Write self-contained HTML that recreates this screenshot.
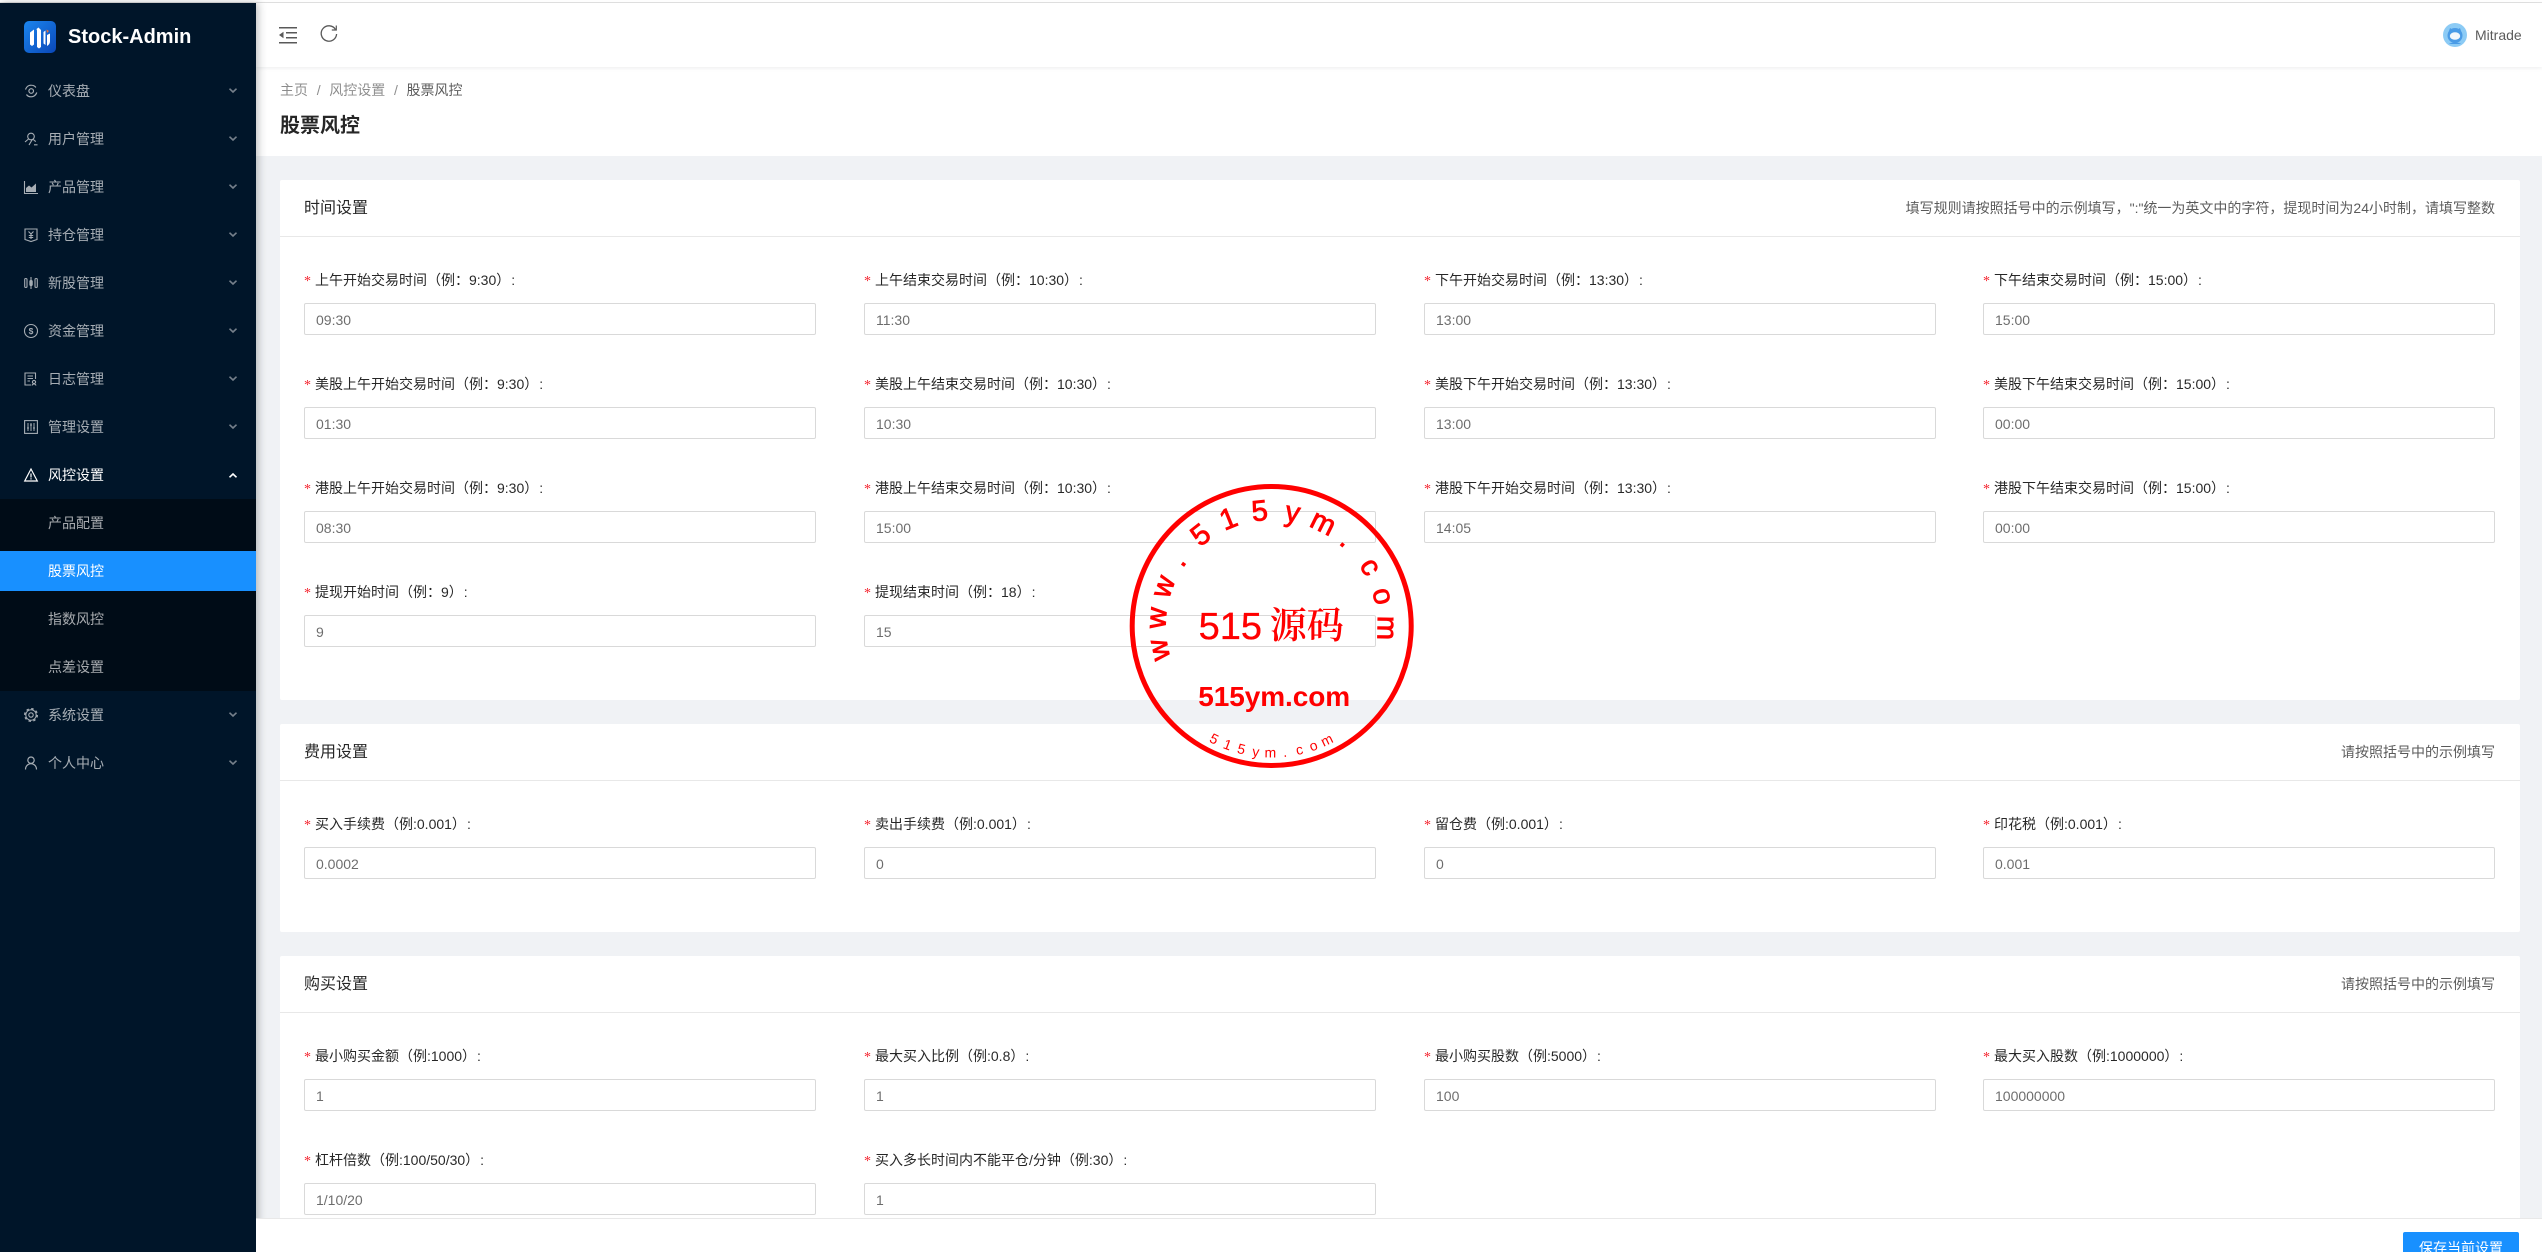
<!DOCTYPE html>
<html lang="zh-CN">
<head>
<meta charset="utf-8">
<title>股票风控</title>
<style>
*{box-sizing:border-box}
html,body{margin:0;padding:0;width:2542px;height:1252px;overflow:hidden;background:#f0f2f5}
body{position:relative;font-family:"Liberation Sans","Noto Sans CJK SC",sans-serif;font-size:14px;color:rgba(0,0,0,.65)}
.abs,.m,.l,.i,.c,.ic,.ch{position:absolute}
#top{left:0;top:0;width:2542px;height:3px;background:#fff;border-bottom:1px solid #e3e3e3}
#side{left:0;top:3px;width:256px;height:1249px;background:#001529;box-shadow:2px 0 8px rgba(29,35,41,.3);z-index:3}
#sub{left:0;top:499px;width:256px;height:192px;background:#000c17;z-index:4}
#act{left:0;top:551px;width:256px;height:40px;background:#1890ff;z-index:5}
.m{left:48px;height:22px;line-height:22px;color:rgba(255,255,255,.65);z-index:6;white-space:nowrap}
.ic{left:24px;width:14px;height:14px;z-index:6;overflow:visible}
.ch{left:229px;width:8px;height:5px;z-index:6;overflow:visible}
#logo{left:24px;top:21px;width:32px;height:32px;z-index:6}
#brand{left:68px;top:20px;height:34px;line-height:34px;color:#fff;font-weight:700;font-size:20px;z-index:6;white-space:nowrap}
#hdr{left:256px;top:3px;width:2286px;height:64px;background:#fff;box-shadow:0 1px 4px rgba(0,21,41,.08);z-index:2}
#crumb{left:256px;top:67px;width:2286px;height:89px;background:#fff}
.c{background:#fff;left:280px;width:2240px;border-radius:2px}
.h{position:absolute;left:0;top:0;width:100%;height:57px;border-bottom:1px solid #e8e8e8}
.t{position:absolute;left:24px;top:17px;font-size:16px;line-height:24px;color:rgba(0,0,0,.85)}
.e{position:absolute;right:25px;top:17px;line-height:22px;color:rgba(0,0,0,.65);white-space:nowrap}
.l{height:22px;line-height:22px;color:rgba(0,0,0,.85);white-space:nowrap}
.l b{font-weight:400;color:#f5222d;font-family:"Liberation Serif",serif;margin-right:4px;font-size:14px}
.l i{font-style:normal;margin-left:1px}
.i{width:512px;height:32px;border:1px solid #d9d9d9;border-radius:2px;padding-left:11px;line-height:32px;color:rgba(0,0,0,.58);background:#fff}
#foot{left:256px;top:1218px;width:2286px;height:34px;background:#fff;border-top:1px solid #e8e8e8;z-index:7}
#btn{left:2403px;top:1232px;width:116px;height:32px;background:#1890ff;border-radius:2px;color:#fff;text-align:center;line-height:32px;z-index:8}
#stamp{left:1100px;top:470px;width:340px;height:320px;z-index:9;overflow:visible}
</style>
</head>
<body>
<div class="abs" id="top"></div>
<div class="abs" id="side"></div>
<div class="abs" id="sub"></div>
<div class="abs" id="act"></div>

<svg class="abs" id="logo" viewBox="0 0 32 32">
<defs><linearGradient id="g" x1="0" y1="0" x2="1" y2="1"><stop offset="0" stop-color="#1b86ee"/><stop offset="1" stop-color="#0a47b8"/></linearGradient></defs>
<rect width="32" height="32" rx="5" fill="url(#g)"/>
<path d="M6 11.500L10 8.500V23.500L8 25 6 23.500ZM12.500 8L14.500 6.500 17 9V26L15 27.500 13 26V9.500ZM19.500 11L21.500 9.500V24L19.500 22.500ZM23 14L26 12.500V20C26 23 24.500 24 23 25Z" fill="#fff"/>
<path d="M22.500 8.500l2.500 1.500-2 2z" fill="#e8703a"/>
</svg>
<div class="abs" id="brand">Stock-Admin</div>

<!-- menu icons -->
<svg class="ic" style="top:84px" viewBox="0 0 14 14" fill="none" stroke="#a6adb4" stroke-width="1.200"><circle cx="7.200" cy="7" r="2.300"/><path d="M1.500 5.500C2.500 2.500 5 1 7.500 1.200c2 .1 3.500 1 4.300 2.300M12.800 8.500C11.800 11.500 9.200 13 6.800 12.800c-2-.1-3.500-1-4.300-2.300"/></svg>
<svg class="ic" style="top:132px" viewBox="0 0 14 14" fill="none" stroke="#a6adb4" stroke-width="1.100"><circle cx="7" cy="4.500" r="3.300"/><path d="M1 10l3.500-3M5 13l3.300-5.500c1.500.2 2.800 1 3.200 2.300M10 12.800h3.500"/></svg>
<svg class="ic" style="top:180px" viewBox="0 0 14 14"><path d="M.5 1v12.500H14" fill="none" stroke="#a6adb4" stroke-width="1.100"/><path d="M2 12V8l3-2.500 2.500 2L12 3.500V12z" fill="#a6adb4"/></svg>
<svg class="ic" style="top:228px" viewBox="0 0 14 14" fill="none" stroke="#a6adb4" stroke-width="1.100"><path d="M1 1h12v10.500l-6 2-6-2z"/><path d="M4.500 3.500L7 6l2.500-2.500M7 6v5M4.800 7.500h4.400M4.800 9.500h4.400"/></svg>
<svg class="ic" style="top:276px" viewBox="0 0 14 14" fill="none" stroke="#a6adb4" stroke-width="1.100"><rect x=".7" y="2.500" width="2.300" height="9" rx="1.100"/><rect x="5.900" y="4.500" width="2.300" height="5" rx="1" fill="#a6adb4"/><rect x="11" y="2.500" width="2.300" height="9" rx="1.100"/><path d="M7 1v12"/></svg>
<svg class="ic" style="top:324px" viewBox="0 0 14 14" fill="none" stroke="#a6adb4" stroke-width="1.100"><circle cx="7" cy="7" r="6.500"/><text x="7" y="10" text-anchor="middle" font-family="Liberation Sans" font-size="8.500" font-weight="700" fill="#a6adb4" stroke="none">$</text></svg>
<svg class="ic" style="top:372px" viewBox="0 0 14 14" fill="none" stroke="#a6adb4" stroke-width="1.100"><path d="M7 13H1V1h10.500v6M3.500 4h5.500M3.500 6.500h5.500M3.500 9h2.500"/><circle cx="10" cy="10" r="1.600"/><path d="M8 13.500c.3-1 1-1.500 2-1.500s1.700.5 2 1.500"/></svg>
<svg class="ic" style="top:420px" viewBox="0 0 14 14" fill="none" stroke="#a6adb4" stroke-width="1.100"><rect x=".6" y=".6" width="12.800" height="12.800"/><path d="M4 3v8M7 3v8M10 3v8M3 8h2M6 5h2M9 8h2" stroke-width="1"/></svg>
<svg class="ic" style="top:468px" viewBox="0 0 14 14" fill="none" stroke="#fff" stroke-width="1.200"><path d="M7 1L.7 13h12.600zM7 5.500v4M7 10.300v1.200"/></svg>
<svg class="ic" style="top:708px" viewBox="0 0 14 14" fill="none" stroke="#a6adb4"><circle cx="7" cy="7" r="5.200" stroke-width="1"/><circle cx="7" cy="7" r="6.300" stroke-width="1.400" stroke-dasharray="2.500 2.448"/><circle cx="7" cy="7" r="2.200" stroke-width="1.100"/></svg>
<svg class="ic" style="top:756px" viewBox="0 0 14 14" fill="none" stroke="#a6adb4" stroke-width="1.200"><circle cx="7" cy="4.200" r="3.200"/><path d="M1.500 13.500c0-3.500 2.500-5.800 5.500-5.800s5.500 2.300 5.500 5.800"/></svg>

<!-- chevrons -->
<svg class="ch" style="top:88px" viewBox="0 0 8 5" fill="none" stroke="#76808b" stroke-width="1.600"><path d="M.5.700L4 4l3.500-3.300"/></svg>
<svg class="ch" style="top:136px" viewBox="0 0 8 5" fill="none" stroke="#76808b" stroke-width="1.600"><path d="M.5.700L4 4l3.500-3.300"/></svg>
<svg class="ch" style="top:184px" viewBox="0 0 8 5" fill="none" stroke="#76808b" stroke-width="1.600"><path d="M.5.700L4 4l3.500-3.300"/></svg>
<svg class="ch" style="top:232px" viewBox="0 0 8 5" fill="none" stroke="#76808b" stroke-width="1.600"><path d="M.5.700L4 4l3.500-3.300"/></svg>
<svg class="ch" style="top:280px" viewBox="0 0 8 5" fill="none" stroke="#76808b" stroke-width="1.600"><path d="M.5.700L4 4l3.500-3.300"/></svg>
<svg class="ch" style="top:328px" viewBox="0 0 8 5" fill="none" stroke="#76808b" stroke-width="1.600"><path d="M.5.700L4 4l3.500-3.300"/></svg>
<svg class="ch" style="top:376px" viewBox="0 0 8 5" fill="none" stroke="#76808b" stroke-width="1.600"><path d="M.5.700L4 4l3.500-3.300"/></svg>
<svg class="ch" style="top:424px" viewBox="0 0 8 5" fill="none" stroke="#76808b" stroke-width="1.600"><path d="M.5.700L4 4l3.500-3.300"/></svg>
<svg class="ch" style="top:473px" viewBox="0 0 8 5" fill="none" stroke="#fff" stroke-width="1.600"><path d="M.5 4.300L4 1l3.500 3.300"/></svg>
<svg class="ch" style="top:712px" viewBox="0 0 8 5" fill="none" stroke="#76808b" stroke-width="1.600"><path d="M.5.700L4 4l3.500-3.300"/></svg>
<svg class="ch" style="top:760px" viewBox="0 0 8 5" fill="none" stroke="#76808b" stroke-width="1.600"><path d="M.5.700L4 4l3.500-3.300"/></svg>

<div class="m" style="top:80px">仪表盘</div>
<div class="m" style="top:128px">用户管理</div>
<div class="m" style="top:176px">产品管理</div>
<div class="m" style="top:224px">持仓管理</div>
<div class="m" style="top:272px">新股管理</div>
<div class="m" style="top:320px">资金管理</div>
<div class="m" style="top:368px">日志管理</div>
<div class="m" style="top:416px">管理设置</div>
<div class="m" style="top:464px;color:#fff">风控设置</div>
<div class="m" style="top:512px">产品配置</div>
<div class="m" style="top:560px;color:#fff">股票风控</div>
<div class="m" style="top:608px">指数风控</div>
<div class="m" style="top:656px">点差设置</div>
<div class="m" style="top:704px">系统设置</div>
<div class="m" style="top:752px">个人中心</div>

<!-- header -->
<div class="abs" id="hdr">
<svg class="abs" style="left:23px;top:24px" width="18" height="17" viewBox="0 0 18 17" fill="#595959"><rect y="0" width="18" height="1.500"/><rect x="7" y="5" width="11" height="1.500"/><rect x="7" y="10" width="11" height="1.500"/><rect y="15" width="18" height="1.500"/><path d="M4.500 4.800v6.400L0 8z"/></svg>
<svg class="abs" style="left:64px;top:21px" width="18" height="18" viewBox="0 0 18 18" fill="none" stroke="#595959" stroke-width="1.300"><path d="M15.500 5.500A7.700 7.700 0 1 0 16.600 10"/><path d="M16.300 1.500v4.500h-4.500" stroke-width="1.200"/></svg>
<svg class="abs" style="left:2187px;top:20px" width="24" height="24" viewBox="0 0 24 24"><circle cx="12" cy="12" r="12" fill="#8ccbf5"/><path d="M6 8l1-3 3 2h4l3-2 1 3" fill="#4a9be6"/><circle cx="12" cy="12.500" r="7.500" fill="#4a9be6"/><ellipse cx="12" cy="13" rx="5.200" ry="3.800" fill="#f4f7fb"/><path d="M6 21c2-2 10-2 12 0" fill="#4a9be6"/></svg>
<div class="abs" style="left:2219px;top:21px;line-height:22px;color:rgba(0,0,0,.65)">Mitrade</div>
</div>

<div class="abs" id="crumb">
<div class="abs" style="left:24px;top:12px;line-height:22px;white-space:nowrap;color:rgba(0,0,0,.45)">主页<span style="margin:0 8.700px">/</span>风控设置<span style="margin:0 8.700px">/</span><span style="color:rgba(0,0,0,.65)">股票风控</span></div>
<div class="abs" style="left:24px;top:43px;font-size:20px;line-height:32px;font-weight:700;color:rgba(0,0,0,.85)">股票风控</div>
</div>

<!-- card 1 -->
<div class="c" style="top:180px;height:520px"><div class="h"><div class="t">时间设置</div><div class="e">填写规则请按照括号中的示例填写，":"统一为英文中的字符，提现时间为24小时制，请填写整数</div></div></div>
<div class="l" style="left:304px;top:269px"><b>*</b>上午开始交易时间（例：9:30）<i>:</i></div><div class="i" style="left:304px;top:303px">09:30</div>
<div class="l" style="left:864px;top:269px"><b>*</b>上午结束交易时间（例：10:30）<i>:</i></div><div class="i" style="left:864px;top:303px">11:30</div>
<div class="l" style="left:1424px;top:269px"><b>*</b>下午开始交易时间（例：13:30）<i>:</i></div><div class="i" style="left:1424px;top:303px">13:00</div>
<div class="l" style="left:1983px;top:269px"><b>*</b>下午结束交易时间（例：15:00）<i>:</i></div><div class="i" style="left:1983px;top:303px">15:00</div>

<div class="l" style="left:304px;top:373px"><b>*</b>美股上午开始交易时间（例：9:30）<i>:</i></div><div class="i" style="left:304px;top:407px">01:30</div>
<div class="l" style="left:864px;top:373px"><b>*</b>美股上午结束交易时间（例：10:30）<i>:</i></div><div class="i" style="left:864px;top:407px">10:30</div>
<div class="l" style="left:1424px;top:373px"><b>*</b>美股下午开始交易时间（例：13:30）<i>:</i></div><div class="i" style="left:1424px;top:407px">13:00</div>
<div class="l" style="left:1983px;top:373px"><b>*</b>美股下午结束交易时间（例：15:00）<i>:</i></div><div class="i" style="left:1983px;top:407px">00:00</div>

<div class="l" style="left:304px;top:477px"><b>*</b>港股上午开始交易时间（例：9:30）<i>:</i></div><div class="i" style="left:304px;top:511px">08:30</div>
<div class="l" style="left:864px;top:477px"><b>*</b>港股上午结束交易时间（例：10:30）<i>:</i></div><div class="i" style="left:864px;top:511px">15:00</div>
<div class="l" style="left:1424px;top:477px"><b>*</b>港股下午开始交易时间（例：13:30）<i>:</i></div><div class="i" style="left:1424px;top:511px">14:05</div>
<div class="l" style="left:1983px;top:477px"><b>*</b>港股下午结束交易时间（例：15:00）<i>:</i></div><div class="i" style="left:1983px;top:511px">00:00</div>

<div class="l" style="left:304px;top:581px"><b>*</b>提现开始时间（例：9）<i>:</i></div><div class="i" style="left:304px;top:615px">9</div>
<div class="l" style="left:864px;top:581px"><b>*</b>提现结束时间（例：18）<i>:</i></div><div class="i" style="left:864px;top:615px">15</div>

<!-- card 2 -->
<div class="c" style="top:724px;height:208px"><div class="h"><div class="t">费用设置</div><div class="e">请按照括号中的示例填写</div></div></div>
<div class="l" style="left:304px;top:813px"><b>*</b>买入手续费（例:0.001）<i>:</i></div><div class="i" style="left:304px;top:847px">0.0002</div>
<div class="l" style="left:864px;top:813px"><b>*</b>卖出手续费（例:0.001）<i>:</i></div><div class="i" style="left:864px;top:847px">0</div>
<div class="l" style="left:1424px;top:813px"><b>*</b>留仓费（例:0.001）<i>:</i></div><div class="i" style="left:1424px;top:847px">0</div>
<div class="l" style="left:1983px;top:813px"><b>*</b>印花税（例:0.001）<i>:</i></div><div class="i" style="left:1983px;top:847px">0.001</div>

<!-- card 3 -->
<div class="c" style="top:956px;height:296px"><div class="h"><div class="t">购买设置</div><div class="e">请按照括号中的示例填写</div></div></div>
<div class="l" style="left:304px;top:1045px"><b>*</b>最小购买金额（例:1000）<i>:</i></div><div class="i" style="left:304px;top:1079px">1</div>
<div class="l" style="left:864px;top:1045px"><b>*</b>最大买入比例（例:0.8）<i>:</i></div><div class="i" style="left:864px;top:1079px">1</div>
<div class="l" style="left:1424px;top:1045px"><b>*</b>最小购买股数（例:5000）<i>:</i></div><div class="i" style="left:1424px;top:1079px">100</div>
<div class="l" style="left:1983px;top:1045px"><b>*</b>最大买入股数（例:1000000）<i>:</i></div><div class="i" style="left:1983px;top:1079px">100000000</div>
<div class="l" style="left:304px;top:1149px"><b>*</b>杠杆倍数（例:100/50/30）<i>:</i></div><div class="i" style="left:304px;top:1183px">1/10/20</div>
<div class="l" style="left:864px;top:1149px"><b>*</b>买入多长时间内不能平仓/分钟（例:30）<i>:</i></div><div class="i" style="left:864px;top:1183px">1</div>

<div class="abs" id="foot"></div>
<div class="abs" id="btn">保存当前设置</div>

<!-- stamp -->
<svg class="abs" id="stamp" viewBox="0 0 340 320">
<g transform="translate(171.700,156)" fill="#f00" text-anchor="middle" font-family="Liberation Sans">
<circle r="139.500" fill="none" stroke="#f00" stroke-width="5"/>
<g font-size="29" stroke="#f00" stroke-width=".8">
<text transform="rotate(-102) translate(0,-106)">w</text>
<text transform="rotate(-86) translate(0,-106)">w</text>
<text transform="rotate(-70) translate(0,-106)">w</text>
<text transform="rotate(-55) translate(0,-106)">.</text>
<text transform="rotate(-38) translate(0,-106)">5</text>
<text transform="rotate(-22) translate(0,-106)">1</text>
<text transform="rotate(-6) translate(0,-106)">5</text>
<text transform="rotate(10.500) translate(0,-106)">y</text>
<text transform="rotate(26.500) translate(0,-106)">m</text>
<text transform="rotate(41) translate(0,-106)">.</text>
<text transform="rotate(59) translate(0,-106)">c</text>
<text transform="rotate(75) translate(0,-106)">o</text>
<text transform="rotate(91) translate(0,-106)">m</text>
</g>
<text x="-41.400" y="13" font-size="38" stroke="#f00" stroke-width=".3">515</text>
<text x="35" y="12" font-size="37" font-family="Noto Serif CJK SC,serif" font-weight="600">源码</text>
<text x="-73.500" y="80" text-anchor="start" font-size="28" font-weight="700" textLength="152" lengthAdjust="spacing">515ym.com</text>
<g font-size="14">
<text transform="rotate(27) translate(0,131.500)">5</text>
<text transform="rotate(20.400) translate(0,131.500)">1</text>
<text transform="rotate(13.800) translate(0,131.500)">5</text>
<text transform="rotate(7.200) translate(0,131.500)">y</text>
<text transform="rotate(.6) translate(0,131.500)">m</text>
<text transform="rotate(-6) translate(0,131.500)">.</text>
<text transform="rotate(-12.600) translate(0,131.500)">c</text>
<text transform="rotate(-19.200) translate(0,131.500)">o</text>
<text transform="rotate(-25.800) translate(0,131.500)">m</text>
</g>
</g>
</svg>
</body>
</html>
